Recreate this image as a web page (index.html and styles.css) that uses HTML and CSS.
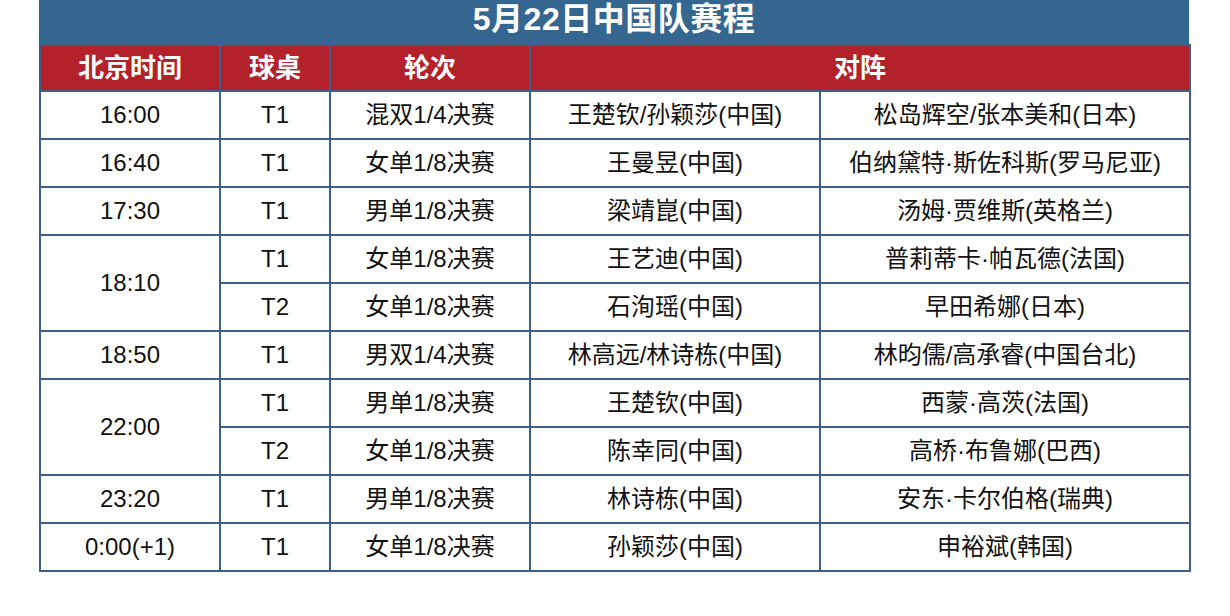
FILE: index.html
```html
<!DOCTYPE html>
<html lang="zh-CN">
<head>
<meta charset="utf-8">
<title>5月22日中国队赛程</title>
<link rel="stylesheet" href="styles.css">
</head>
<body>
<div class="wrap">
  <div class="title">5月22日中国队赛程</div>
  <table class="sched">
    <colgroup>
      <col class="c1"><col class="c2"><col class="c3"><col class="c4"><col class="c5">
    </colgroup>
    <thead>
      <tr class="head">
        <th>北京时间</th><th>球桌</th><th>轮次</th><th colspan="2">对阵</th>
      </tr>
    </thead>
    <tbody>
      <tr><td>16:00</td><td>T1</td><td>混双1/4决赛</td><td>王楚钦/孙颖莎(中国)</td><td>松岛辉空/张本美和(日本)</td></tr>
      <tr><td>16:40</td><td>T1</td><td>女单1/8决赛</td><td>王曼昱(中国)</td><td>伯纳黛特·斯佐科斯(罗马尼亚)</td></tr>
      <tr><td>17:30</td><td>T1</td><td>男单1/8决赛</td><td>梁靖崑(中国)</td><td>汤姆·贾维斯(英格兰)</td></tr>
      <tr><td rowspan="2">18:10</td><td>T1</td><td>女单1/8决赛</td><td>王艺迪(中国)</td><td>普莉蒂卡·帕瓦德(法国)</td></tr>
      <tr><td>T2</td><td>女单1/8决赛</td><td>石洵瑶(中国)</td><td>早田希娜(日本)</td></tr>
      <tr><td>18:50</td><td>T1</td><td>男双1/4决赛</td><td>林高远/林诗栋(中国)</td><td>林昀儒/高承睿(中国台北)</td></tr>
      <tr><td rowspan="2">22:00</td><td>T1</td><td>男单1/8决赛</td><td>王楚钦(中国)</td><td>西蒙·高茨(法国)</td></tr>
      <tr><td>T2</td><td>女单1/8决赛</td><td>陈幸同(中国)</td><td>高桥·布鲁娜(巴西)</td></tr>
      <tr><td>23:20</td><td>T1</td><td>男单1/8决赛</td><td>林诗栋(中国)</td><td>安东·卡尔伯格(瑞典)</td></tr>
      <tr><td>0:00(+1)</td><td>T1</td><td>女单1/8决赛</td><td>孙颖莎(中国)</td><td>申裕斌(韩国)</td></tr>
    </tbody>
  </table>
</div>
</body>
</html>
```
FILE: styles.css
```css
html, body {
  margin: 0;
  padding: 0;
  background: #ffffff;
}
body {
  font-family: "Liberation Sans", "Noto Sans CJK SC", Arial, sans-serif;
  color: #111111;
}
.wrap {
  padding-left: 39px;
  width: 1150px;
}
.title {
  height: 44px;
  box-sizing: border-box;
  padding-bottom: 6px;
  background: #34668f;
  color: #ffffff;
  font-weight: bold;
  font-size: 32px;
  line-height: 36px;
  letter-spacing: 0.5px;
  display: flex;
  align-items: center;
  justify-content: center;
}
.sched {
  width: 1150px;
  table-layout: fixed;
  border-collapse: collapse;
}
.c1 { width: 180px; }
.c2 { width: 110px; }
.c3 { width: 200px; }
.c4 { width: 290px; }
.c5 { width: 370px; }
.sched th,
.sched td {
  border: 2px solid #3e5f86;
  padding: 0;
  text-align: center;
  vertical-align: middle;
  white-space: nowrap;
}
.sched th {
  background: #b3212b;
  color: #ffffff;
  font-weight: bold;
  font-size: 26px;
  line-height: 30px;
  height: 44px;
}
.sched td {
  font-size: 24px;
  line-height: 28px;
  height: 46px;
}
```
